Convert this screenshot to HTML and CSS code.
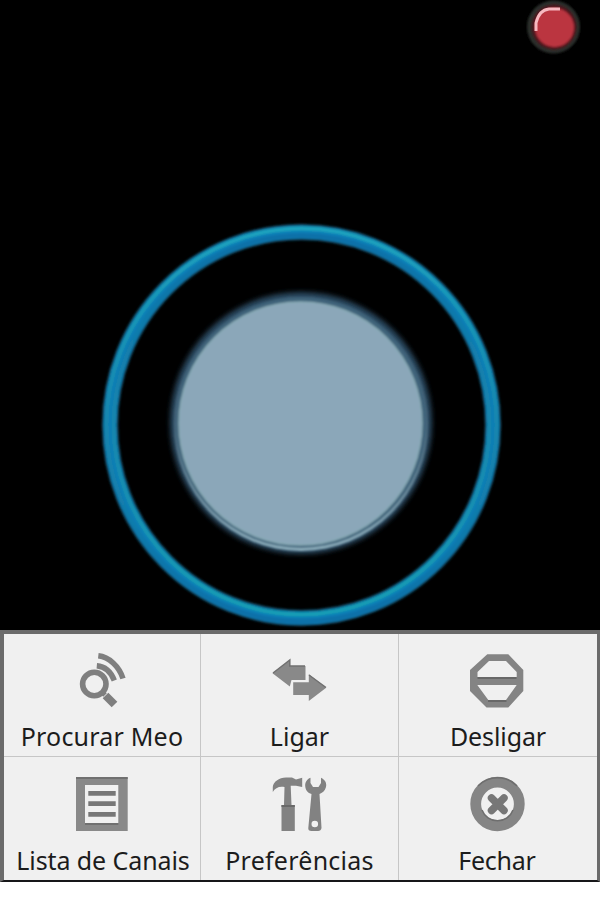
FILE: index.html
```html
<!DOCTYPE html>
<html lang="pt">
<head>
<meta charset="utf-8">
<title>Comando Meo</title>
<link rel="stylesheet" href="styles.css">
</head>
<body>
<main class="stage">
  <svg class="dial" viewBox="0 0 600 630">
    <defs>
      <linearGradient id="outerEdge" x1="0" y1="0" x2="0" y2="1"><stop offset="0" stop-color="#1ba4be"/><stop offset=".5" stop-color="#1787ae"/><stop offset="1" stop-color="#0a6fa8"/></linearGradient>
      <linearGradient id="innerEdge" x1="0" y1="0" x2="0" y2="1"><stop offset="0" stop-color="#0b70a8"/><stop offset=".5" stop-color="#1787ae"/><stop offset="1" stop-color="#149fb5"/></linearGradient>
      <linearGradient id="rim" x1="0" y1="0" x2="0" y2="1"><stop offset="0" stop-color="#36566c"/><stop offset=".5" stop-color="#49677b"/><stop offset="1" stop-color="#8fb0be"/></linearGradient>
      <filter id="soft1"><feGaussianBlur stdDeviation="1"/></filter>
      <filter id="soft2"><feGaussianBlur stdDeviation="2.5"/></filter>
    </defs>
    <g fill="none" filter="url(#soft1)">
      <ellipse cx="301.5" cy="425" rx="191.5" ry="193" stroke="#12465e" stroke-width="16.5"/>
      <ellipse cx="301.5" cy="425" rx="191.5" ry="193" stroke="#0a7cb5" stroke-width="13"/>
      <ellipse cx="301.5" cy="425" rx="195" ry="196.5" stroke="url(#outerEdge)" stroke-width="4"/>
      <ellipse cx="301.5" cy="425" rx="188" ry="189.5" stroke="url(#innerEdge)" stroke-width="4"/>
    </g>
    <circle cx="301" cy="423" r="131" fill="#2b4a60" filter="url(#soft2)"/>
    <g filter="url(#soft1)">
      <circle cx="301" cy="424" r="127" fill="url(#rim)"/>
      <circle cx="301" cy="422.500" r="125.500" fill="#41647a"/>
      <circle cx="300.500" cy="423.500" r="121.500" fill="#8ba7b9" stroke="#86a9b4" stroke-width="1.500"/>
    </g>
    <g filter="url(#soft1)">
      <circle cx="553.500" cy="27" r="26.500" fill="#292d2c"/>
      <circle cx="554" cy="27" r="22.500" fill="#4c141b"/>
      <circle cx="554.500" cy="27.500" r="19.500" fill="#bb3541"/>
    </g>
    <path class="soft" d="M536 31V23Q539 10 549 9H560" fill="none" stroke="#f7b8bf" stroke-width="3"/>
  </svg>
</main>
<nav class="menu">
  <a class="item search">
    <svg class="icon" viewBox="0 0 60 60"><g fill="none" stroke="#7f7f7f"><circle cx="22.3" cy="34" r="11.700" stroke-width="5.600"/><path d="M30 42l3 3" stroke-width="5"/><path d="M33.500 45.500l9 9" stroke-width="8"/><path d="M26.300 5.800C37 7 47 16 51 28.500M24.800 15.800C33 16.500 39 22 42.300 30.500" stroke-width="5.500"/></g></svg>
    <span class="label">Procurar Meo</span>
  </a>
  <a class="item connect">
    <svg class="icon" viewBox="0 0 60 60"><path fill="#898989" d="M2.500 23.300L19.800 10V16H35.500V30H21.500L19.800 36.500zM56.200 37.700L38.800 24.300V32.300H23.200V45H38.800V51z"/><path d="M3 23L19.800 10V16H35M39 25L56 37.500" fill="none" stroke="#707070" stroke-width="1.500"/></svg>
    <span class="label">Ligar</span>
  </a>
  <a class="item disconnect">
    <svg class="icon" viewBox="0 0 60 60"><path fill="#848484" fill-rule="evenodd" d="M19.300 4.300H40.300L55.300 20V41L40.300 57.500H18.500L2 41V20zM21 11L9.500 22V27H48.700V22L38 11zM9.300 35H48.700L38 50H20.300z"/><path d="M9.500 28H48.500M20 51H38.500" stroke="#686868" stroke-width="2"/></svg>
    <span class="label">Desligar</span>
  </a>
  <a class="item channels">
    <svg class="icon" viewBox="0 0 60 60"><path fill="#898989" fill-rule="evenodd" d="M4 4.300H55.700V58H4zM13 12V50H46.300V12z"/><path d="M4 5H55.700M13 51H46.300" stroke="#707070" stroke-width="2"/><path d="M16.300 20.300H43.700M16.300 30.700H43.700M16.300 41.300H43.700" stroke="#777" stroke-width="4.800"/></svg>
    <span class="label">Lista de Canais</span>
  </a>
  <a class="item settings">
    <svg class="icon" viewBox="0 0 60 60"><path fill="#828282" d="M2.800 19V14C3 9 9 4.700 16 4.500H22L26 6.500L32.200 4.700V14L26 12.800H20.700L21.500 32H24.800V58H11.500V32H14L14.500 14C9 13 5 15 2.800 19z"/><path fill="#828282" fill-rule="evenodd" d="M40.500 4.700V10L43 14H48.500L51 10V4.700C55 6.500 57 10 56 14C55 18 52 20 49.500 21L51.500 55Q51 58 48 58H41.500Q38 58 38.300 55L41.500 21C38 20 35.500 17.500 35.200 13C35 9 37 6 40.500 4.700zM44.800 47.700a3.300 3.300 0 1 0 0 6.600a3.300 3.300 0 0 0 0-6.600z"/><path d="M11.500 33H24.800" stroke="#696969" stroke-width="2"/></svg>
    <span class="label">Preferências</span>
  </a>
  <a class="item close">
    <svg class="icon" viewBox="0 0 60 60"><g fill="none" stroke="#858585"><circle cx="29.500" cy="31" r="21.800" stroke-width="10.800"/><path d="M23.500 25L36 37.500M36 25L23.500 37.500" stroke="#777" stroke-width="7.500" stroke-linecap="round"/></g><path d="M14 37a16.500 16.500 0 0 0 31 0M10 13a27 27 0 0 1 39 0" fill="none" stroke="#6e6e6e" stroke-width="1.500"/></svg>
    <span class="label">Fechar</span>
  </a>
</nav>
</body>
</html>
```

FILE: styles.css
```css
* { box-sizing: border-box; }
body {
  margin: 0;
  width: 600px;
  height: 900px;
  overflow: hidden;
  background: #fff;
  font-family: "Noto Sans", "Open Sans", sans-serif;
}
.stage { height: 630px; background: #000; }
.dial { display: block; width: 600px; height: 630px; }
.soft { filter: blur(.5px); }
.menu {
  display: grid;
  grid-template-columns: 197px 198px 198px;
  grid-template-rows: 123px 123px;
  height: 252px;
  border: solid #6b6b6b;
  border-width: 4px 3px 2px 4px;
  border-bottom-color: #171719;
}
.item {
  display: flex;
  flex-direction: column;
  align-items: center;
  padding-top: 16px;
  background: #f0f0f0;
  border-right: 1px solid #c6c6c6;
  border-bottom: 1px solid #c6c6c6;
}
.item:nth-child(3n) { border-right: 0; }
.item:nth-child(n+4) { border-bottom: 0; }
.icon {
  flex: none;
  width: 60px;
  height: 60px;
  filter: blur(.6px);
}
.label {
  margin-top: 9px;
  font-size: 25px;
  line-height: 34px;
  color: #1c1c1c;
  white-space: nowrap;
}
.item:nth-child(n+4) .label { margin-top: 10px; }
.search .label { letter-spacing: .2px; }
.channels .label { letter-spacing: -.1px; padding-left: 2px; }
.settings .label { letter-spacing: .25px; }
.disconnect .label { letter-spacing: -.1px; }
.close .label { letter-spacing: -.25px; margin-right: 2px; }
```
